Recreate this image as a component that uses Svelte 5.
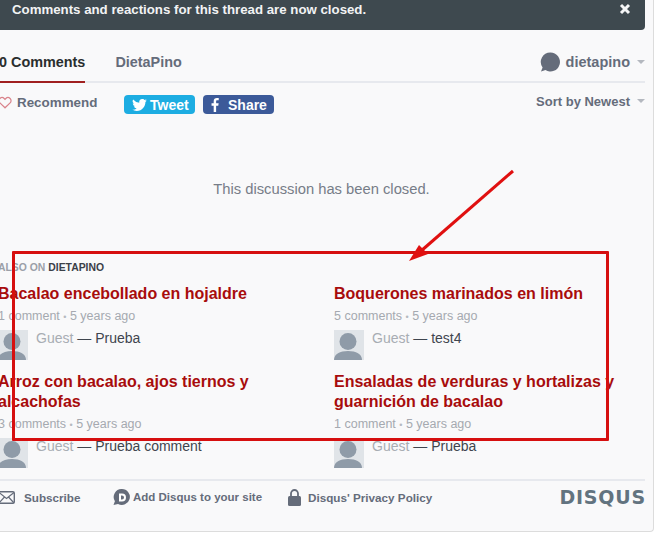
<script>
  const posts = [
    { title: 'Bacalao encebollado en hojaldre', meta: '1 comment', msg: 'Prueba' },
    { title: 'Boquerones marinados en limón', meta: '5 comments', msg: 'test4' },
    { title: 'Arroz con bacalao, ajos tiernos y alcachofas', meta: '3 comments', msg: 'Prueba comment' },
    { title: 'Ensaladas de verduras y hortalizas y guarnición de bacalao', meta: '1 comment', msg: 'Prueba' }
  ];
</script>

<div class="frame">
  <div class="panel">
    <div class="column">
      <div class="notice">
        <span>Comments and reactions for this thread are now closed.</span>
        <svg class="close" viewBox="0 0 12 12" width="12" height="12"><path d="M2 2l8 8M10 2l-8 8" stroke="#f4f5f6" stroke-width="3" /></svg>
      </div>

      <div class="tabs">
        <div class="tab active">0 Comments</div>
        <div class="tab">DietaPino</div>
        <div class="user">
          <svg viewBox="0 0 20 20" width="20" height="20"><path d="M10.500 0.500a9.500 9.500 0 1 1-5 17.600L1 19.500l1.600-4A9.500 9.500 0 0 1 10.500 0.500z" fill="#656c7a" /></svg>
          <span>dietapino</span>
          <i class="caret"></i>
        </div>
      </div>

      <div class="actions">
        <div class="recommend">
          <svg viewBox="0 0 14 13" width="14" height="13"><path d="M7 11.800 1.900 6.900a3 3 0 0 1 0-4.400 3.100 3.100 0 0 1 4.300 0l.8.8.8-.8a3.100 3.100 0 0 1 4.300 0 3 3 0 0 1 0 4.400z" fill="none" stroke="#d9828a" stroke-width="1.200" /></svg>
          <span>Recommend</span>
        </div>
        <div class="share tweet">
          <svg viewBox="0 0 16 13" width="15" height="12"><path d="M16 1.500a6.500 6.500 0 0 1-1.900.5A3.300 3.300 0 0 0 15.500.2a6.600 6.600 0 0 1-2.100.8A3.300 3.300 0 0 0 7.800 4 9.300 9.300 0 0 1 1.100.6a3.300 3.300 0 0 0 1 4.400A3.300 3.300 0 0 1 .7 4.600a3.300 3.300 0 0 0 2.600 3.200 3.300 3.300 0 0 1-1.500.1 3.300 3.300 0 0 0 3.100 2.300A6.600 6.600 0 0 1 0 11.500 9.300 9.300 0 0 0 5 13c6 0 9.400-5 9.400-9.400v-.4A6.700 6.700 0 0 0 16 1.500z" fill="#fff" /></svg>
          <span>Tweet</span>
        </div>
        <div class="share fb">
          <svg viewBox="0 0 8 15" width="8" height="14"><path d="M5.200 15V8.200h2.300l.4-2.700H5.200V3.800c0-.8.200-1.300 1.300-1.300H8V.1C7.700.1 6.900 0 6 0 4 0 2.600 1.200 2.600 3.500v2H.3v2.700h2.300V15z" fill="#fff" /></svg>
          <span>Share</span>
        </div>
        <div class="sort"><span>Sort by Newest</span><i class="caret"></i></div>
      </div>

      <p class="closed">This discussion has been closed.</p>

      <div class="also">ALSO ON <b>DIETAPINO</b></div>

      <div class="grid">
        {#each posts as p}
          <article class="post">
            <h3>{p.title}</h3>
            <div class="meta">{p.meta} <span class="dot">•</span> 5 years ago</div>
            <div class="who">
              <div class="avatar">
                <svg viewBox="0 0 30 30" width="30" height="30"><rect width="30" height="30" fill="#e0e4e8" /><circle cx="14" cy="11.500" r="8.500" fill="#8f9ba8" /><path d="M0 30c0-6 6-9 14-9s14 3 14 9z" fill="#8f9ba8" /></svg>
              </div>
              <div class="line"><span class="guest">Guest</span> — {p.msg}</div>
            </div>
          </article>
        {/each}
      </div>

      <div class="footer">
        <div class="link subscribe">
          <svg viewBox="0 0 17 13" width="17" height="13"><rect x="0.700" y="0.700" width="15.600" height="11.600" rx="1.500" fill="none" stroke="#656c7a" stroke-width="1.400" /><path d="M1 1.500l7.500 6 7.500-6M1 12l5.500-6M16 12l-5.500-6" fill="none" stroke="#656c7a" stroke-width="1.200" /></svg>
          <span>Subscribe</span>
        </div>
        <div class="link add">
          <svg viewBox="0 0 17 17" width="17" height="17"><path d="M9 0a8 8 0 1 1-4 15l-4.500 1 1.400-3.800A8 8 0 0 1 9 0z" fill="#656c7a" /><path d="M6 4.500h3a4 4 0 0 1 0 8H6zM8 6.500v4h1a2 2 0 0 0 0-4z" fill="#fff" fill-rule="evenodd" /></svg>
          <span>Add Disqus to your site</span>
        </div>
        <div class="link privacy">
          <svg viewBox="0 0 13 17" width="13" height="17"><path d="M3 7V4.500a3.500 3.500 0 0 1 7 0V7" fill="none" stroke="#656c7a" stroke-width="1.800" /><rect y="7" width="13" height="10" rx="1.500" fill="#656c7a" /></svg>
          <span>Disqus' Privacy Policy</span>
        </div>
        <div class="logo">DISQUS</div>
      </div>
    </div>
  </div>

  <div class="mark-box"></div>
  <svg class="mark-arrow" viewBox="0 0 672 536" width="672" height="536">
    <path d="M513 171 421 251" stroke="#e01010" stroke-width="3" fill="none" />
    <path d="M409 261 419 245 428 254z" fill="#e01010" />
  </svg>
</div>

<style>
  :global(body) {
    margin: 0;
    background: #fff;
  }
  .frame {
    position: relative;
    width: 672px;
    height: 536px;
    overflow: hidden;
    font-family: "Liberation Sans", Arial, sans-serif;
  }
  .panel {
    box-sizing: border-box;
    width: 654px;
    height: 532px;
    background: #f9f9fa;
    border-right: 1px solid #dcdcdc;
    border-bottom: 1px solid #dcdcdc;
    border-bottom-right-radius: 4px;
    padding-right: 8px;
    overflow: hidden;
  }
  .column {
    margin-left: -8px;
    padding-left: 6px;
  }
  .notice {
    display: flex;
    justify-content: space-between;
    align-items: flex-start;
    height: 30px;
    box-sizing: border-box;
    background: #3e494f;
    border-radius: 0 0 4px 4px;
    color: #f2f3f4;
    font-size: 13.250px;
    font-weight: bold;
    line-height: 20px;
    padding: 0 14px 0 20px;
    margin-left: -6px;
  }
  .close {
    margin-top: 3px;
  }
  .tabs {
    display: flex;
    align-items: flex-end;
    height: 51px;
    border-bottom: 2px solid #e7e9ee;
    font-size: 14.400px;
    font-weight: bold;
    color: #656c7a;
  }
  .tab {
    height: 51px;
    box-sizing: border-box;
    padding-top: 21px;
    line-height: 18px;
    margin-bottom: -2px;
    margin-right: 30px;
  }
  .tab.active {
    color: #2a2e2e;
    border-bottom: 2px solid #a02020;
    padding-left: 1px;
  }
  .user {
    margin-left: auto;
    align-self: flex-start;
    display: flex;
    align-items: center;
    gap: 6px;
    margin-top: 22px;
    font-size: 14.500px;
  }
  .caret {
    display: inline-block;
    width: 0;
    height: 0;
    border-left: 4px solid transparent;
    border-right: 4px solid transparent;
    border-top: 4px solid #b4b8bf;
    margin-left: 1px;
  }
  .actions {
    display: flex;
    align-items: flex-start;
    height: 50px;
    font-size: 13.400px;
    font-weight: bold;
    color: #656c7a;
  }
  .recommend {
    display: flex;
    align-items: center;
    gap: 5px;
    height: 20px;
    margin-top: 9px;
    margin-left: -8px;
    padding-left: 8px;
    width: 118px;
    margin-right: 8px;
  }
  .share {
    box-sizing: border-box;
    display: flex;
    align-items: center;
    height: 19px;
    width: 71px;
    margin-top: 12px;
    margin-right: 8px;
    border-radius: 4px;
    color: #fff;
    font-size: 14px;
    gap: 3px;
    padding-left: 8px;
  }
  .tweet {
    background: #1dade2;
  }
  .fb {
    background: #3c5a99;
    gap: 9px;
  }
  .sort {
    margin-left: auto;
    display: flex;
    align-items: center;
    gap: 6px;
    height: 18px;
    margin-top: 9px;
    font-size: 13px;
  }
  .closed {
    margin: 0;
    height: 0;
    position: relative;
    top: 47px;
    text-align: center;
    font-size: 14.750px;
    line-height: 18px;
    color: #777d88;
    white-space: nowrap;
  }
  .also {
    margin-top: 129px;
    font-size: 10.400px;
    line-height: 12px;
    font-weight: bold;
    color: #9ba0a8;
  }
  .also b {
    color: #3b4048;
  }
  .grid {
    display: grid;
    grid-template-columns: 336px 1fr;
    margin-top: 10px;
  }
  .post {
    height: 88px;
    width: 322px;
  }
  .post:nth-child(n + 3) {
    height: 100px;
  }
  h3 {
    margin: 0;
    font-size: 16px;
    line-height: 20px;
    font-weight: bold;
    color: #a80c0c;
  }
  .meta {
    margin-top: 4px;
    font-size: 12.500px;
    line-height: 16px;
    color: #a5a9b0;
  }
  .dot {
    font-size: 9px;
    color: #b5b9c0;
  }
  .who {
    display: flex;
    gap: 8px;
    margin-top: 5px;
    height: 30px;
  }
  .avatar {
    width: 30px;
    height: 30px;
  }
  .line {
    font-size: 14px;
    line-height: 16px;
    color: #3f454e;
  }
  .guest {
    color: #a8adb3;
  }
  .footer {
    display: flex;
    align-items: center;
    height: 32px;
    margin-top: 7px;
    border-top: 2px solid #e7e9ee;
    font-size: 11.700px;
    font-weight: bold;
    color: #656c7a;
  }
  .link {
    display: flex;
    align-items: center;
    gap: 9px;
  }
  .subscribe {
    width: 115px;
  }
  .add {
    gap: 3px;
    width: 175px;
    font-size: 11.500px;
  }
  .privacy {
    gap: 7px;
  }
  .logo {
    margin-left: auto;
    font-family: "DejaVu Sans", sans-serif;
    font-size: 19px;
    font-weight: bold;
    letter-spacing: 0.800px;
    color: #62737f;
    margin-right: -1px;
  }
  .mark-box {
    position: absolute;
    box-sizing: border-box;
    left: 12px;
    top: 251px;
    width: 597px;
    height: 190px;
    border: 3px solid #d60f0f;
    border-radius: 1px;
  }
  .mark-arrow {
    position: absolute;
    left: 0;
    top: 0;
  }
</style>
